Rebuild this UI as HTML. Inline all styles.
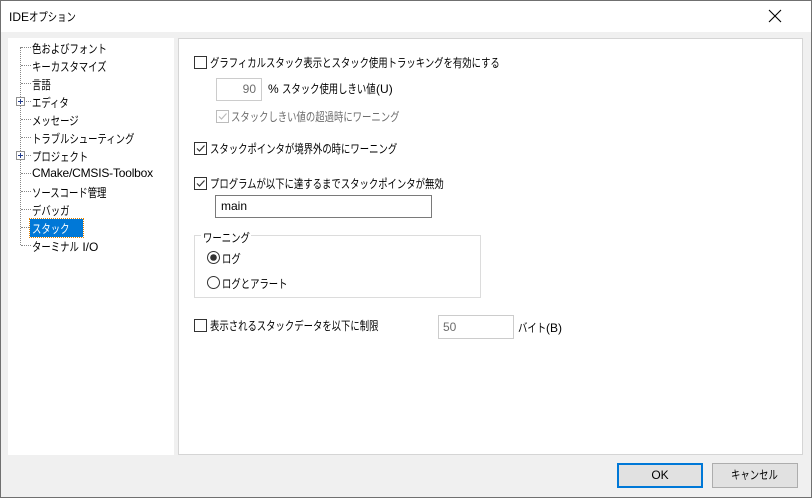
<!DOCTYPE html>
<html><head><meta charset="utf-8"><style>
*{margin:0;padding:0;box-sizing:border-box}
body{width:812px;height:498px;overflow:hidden;background:#f0f0f0;font-family:"Liberation Sans","Noto Sans CJK JP",sans-serif;font-size:12px;color:#000;position:relative}
.a{position:absolute;white-space:nowrap}
.j{transform:scaleX(0.78);transform-origin:0 0}
.s{display:inline-block;transform:scaleX(0.78);transform-origin:0 0}
.win{position:absolute;left:0;top:0;width:812px;height:498px;border:1px solid #707070}
.title{position:absolute;left:1px;top:1px;width:810px;height:31px;background:#fff}
.cb{position:absolute;width:13px;height:13px;border:1px solid #333;background:#fff}
.cb svg{position:absolute;left:0;top:0}
.tree{position:absolute;left:8px;top:38px;width:166px;height:417px;background:#fff}
.right{position:absolute;left:178px;top:38px;width:625px;height:417px;background:#fff;border:1px solid #d5d5d5}
.dots{position:absolute;border-left:1px dotted #888}
.h{position:absolute;border-top:1px dotted #888;width:10px}
.btn{position:absolute;height:25px;background:#e1e1e1;border:1px solid #adadad;text-align:center;line-height:23px}
</style></head><body>
<div class="win"></div>
<div class="title"></div>
<div class="a" style="left:9px;top:8px">IDE<span class="s" style="margin-right:-13px">オプション</span></div>
<svg class="a" style="left:768px;top:9px" width="14" height="14"><path d="M1 1L13 13M13 1L1 13" stroke="#000" stroke-width="1.1"/></svg>

<div class="tree">
<div class="dots" style="left:12px;top:9px;height:198px"></div>
</div>
<div class="a j" style="left:32px;top:40px">色およびフォント</div>
<div class="a j" style="left:32px;top:58px">キーカスタマイズ</div>
<div class="a j" style="left:32px;top:76px">言語</div>
<div class="a j" style="left:32px;top:94px">エディタ</div>
<div class="a j" style="left:32px;top:112px">メッセージ</div>
<div class="a j" style="left:32px;top:130px">トラブルシューティング</div>
<div class="a j" style="left:32px;top:148px">プロジェクト</div>
<div class="a" style="left:32px;top:166px;letter-spacing:-0.2px">CMake/CMSIS-Toolbox</div>
<div class="a j" style="left:32px;top:184px">ソースコード管理</div>
<div class="a j" style="left:32px;top:202px">デバッガ</div>
<div class="a" style="left:30px;top:219px;width:53px;height:18px;background:#0078d7;outline:1px dotted #e08000"></div>
<div class="a j" style="left:32px;top:220px;color:#fff">スタック</div>
<div class="a" style="left:32px;top:238px"><span class="s" style="margin-right:-13px">ターミナル</span> I/O</div>
<div class="h" style="left:21px;top:47px"></div><div class="h" style="left:21px;top:65px"></div><div class="h" style="left:21px;top:83px"></div><div class="h" style="left:26px;top:101px;width:5px"></div><div class="h" style="left:21px;top:119px"></div><div class="h" style="left:21px;top:137px"></div><div class="h" style="left:26px;top:155px;width:5px"></div><div class="h" style="left:21px;top:173px"></div><div class="h" style="left:21px;top:191px"></div><div class="h" style="left:21px;top:209px"></div><div class="h" style="left:21px;top:227px;width:8px"></div><div class="h" style="left:21px;top:245px"></div>
<svg class="a" style="left:16px;top:97px" width="9" height="9"><rect x=".5" y=".5" width="8" height="8" fill="#fff" stroke="#919191"/><path d="M2 4.5H7M4.5 2V7" stroke="#223c8c"/></svg>
<svg class="a" style="left:16px;top:151px" width="9" height="9"><rect x=".5" y=".5" width="8" height="8" fill="#fff" stroke="#919191"/><path d="M2 4.5H7M4.5 2V7" stroke="#223c8c"/></svg>

<div class="right"></div>
<div class="cb" style="left:194px;top:56px"></div>
<div class="a j" style="left:210px;top:54px">グラフィカルスタック表示とスタック使用トラッキングを有効にする</div>
<div class="a" style="left:216px;top:78px;width:46px;height:23px;border:1px solid #ccc;background:#fff;color:#6d6d6d;text-align:right;padding:3px 5px 0 0">90</div>
<div class="a" style="left:268px;top:80px">% <span class="s" style="margin-right:-26px">スタック使用しきい値</span>(U)</div>
<div class="cb" style="left:216px;top:110px;border-color:#bcbcbc"><svg width="11" height="11"><path d="M2 5.5L4.5 8L9.5 2.5" stroke="#bcbcbc" fill="none" stroke-width="1.2"/></svg></div>
<div class="a j" style="left:231px;top:108px;color:#6d6d6d">スタックしきい値の超過時にワーニング</div>
<div class="cb" style="left:194px;top:142px"><svg width="11" height="11"><path d="M2 5.5L4.5 8L9.5 2.5" stroke="#333" fill="none" stroke-width="1.2"/></svg></div>
<div class="a j" style="left:210px;top:140px">スタックポインタが境界外の時にワーニング</div>
<div class="cb" style="left:194px;top:177px"><svg width="11" height="11"><path d="M2 5.5L4.5 8L9.5 2.5" stroke="#333" fill="none" stroke-width="1.2"/></svg></div>
<div class="a j" style="left:210px;top:175px">プログラムが以下に達するまでスタックポインタが無効</div>
<div class="a" style="left:215px;top:195px;width:217px;height:23px;border:1px solid #7a7a7a;background:#fff;padding:3px 5px">main</div>
<div class="a" style="left:194px;top:235px;width:287px;height:63px;border:1px solid #dcdcdc"></div>
<div class="a" style="left:201px;top:229px;width:50px;height:14px;background:#fff"></div>
<div class="a j" style="left:203px;top:229px">ワーニング</div>
<svg class="a" style="left:207px;top:251px" width="13" height="13"><circle cx="6.5" cy="6.5" r="6" fill="#fff" stroke="#333"/><circle cx="6.5" cy="6.5" r="3.3" fill="#333"/></svg>
<div class="a j" style="left:222px;top:250px">ログ</div>
<svg class="a" style="left:207px;top:276px" width="13" height="13"><circle cx="6.5" cy="6.5" r="6" fill="#fff" stroke="#333"/></svg>
<div class="a j" style="left:222px;top:275px">ログとアラート</div>
<div class="cb" style="left:194px;top:319px"></div>
<div class="a j" style="left:210px;top:317px">表示されるスタックデータを以下に制限</div>
<div class="a" style="left:438px;top:315px;width:76px;height:24px;border:1px solid #ccc;background:#fff;color:#6d6d6d;padding:4px 4px">50</div>
<div class="a" style="left:518px;top:319px"><span class="s" style="margin-right:-8px">バイト</span>(B)</div>

<div class="btn" style="left:617px;top:463px;width:86px;border:2px solid #0078d7;line-height:21px">OK</div>
<div class="btn" style="left:712px;top:463px;width:86px"><span class="s" style="margin-right:-13px">キャンセル</span></div>
</body></html>
